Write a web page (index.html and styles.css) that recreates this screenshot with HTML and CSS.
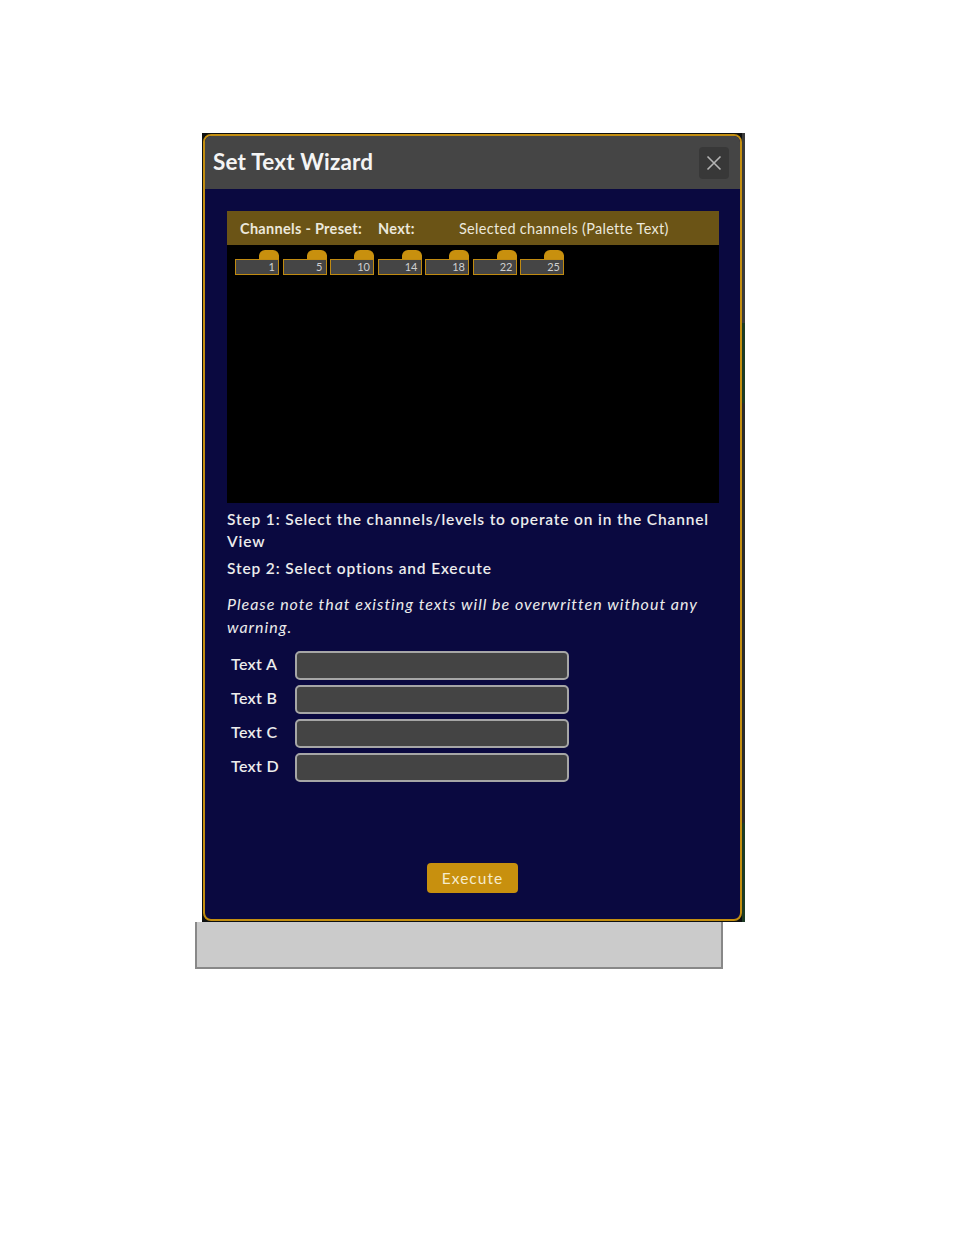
FILE: index.html
```html
<!DOCTYPE html>
<html>
<head>
<meta charset="utf-8">
<link rel="stylesheet" href="styles.css">
</head>
<body>
<div class="shot">
  <div class="strip">
    <span class="seg s1"></span><span class="seg s2"></span><span class="seg s3"></span><span class="seg s4"></span>
  </div>
  <div class="dialog">
    <div class="header">
      <div class="title">Set Text Wizard</div>
      <div class="close">
        <svg width="16" height="16" viewBox="0 0 16 16"><path d="M1.5 1.5 L14.5 14.5 M14.5 1.5 L1.5 14.5" stroke="#b4b4b4" stroke-width="1.6" fill="none"/></svg>
      </div>
    </div>
    <div class="body">
      <div class="panel">
        <div class="panel-head">
          <span class="b lbl1">Channels - Preset:</span>
          <span class="b lbl2">Next:</span>
          <span class="lbl3">Selected channels (Palette Text)</span>
        </div>
        <div class="tiles">
          <div class="tile"><div class="tab"></div><div class="box">1</div></div>
          <div class="tile"><div class="tab"></div><div class="box">5</div></div>
          <div class="tile"><div class="tab"></div><div class="box">10</div></div>
          <div class="tile"><div class="tab"></div><div class="box">14</div></div>
          <div class="tile"><div class="tab"></div><div class="box">18</div></div>
          <div class="tile"><div class="tab"></div><div class="box">22</div></div>
          <div class="tile"><div class="tab"></div><div class="box">25</div></div>
        </div>
      </div>
      <p class="step step1">Step 1: Select the channels/levels to operate on in the Channel View</p>
      <p class="step step2">Step 2: Select options and Execute</p>
      <p class="note">Please note that existing texts will be overwritten without any warning.</p>
      <div class="fields">
        <div class="row"><span class="flabel">Text A</span><div class="input"></div></div>
        <div class="row"><span class="flabel">Text B</span><div class="input"></div></div>
        <div class="row"><span class="flabel">Text C</span><div class="input"></div></div>
        <div class="row"><span class="flabel">Text D</span><div class="input"></div></div>
      </div>
      <div class="actions"><div class="execute">Execute</div></div>
    </div>
  </div>
</div>
<div class="greybox"></div>
</body>
</html>
```
FILE: styles.css
```css
html, body {
  margin: 0;
  padding: 0;
  background: #ffffff;
}
body {
  padding-top: 133px;
  font-family: Lato, "Open Sans", "Liberation Sans", sans-serif;
}
.shot {
  margin-left: 202px;
  width: 543px;
  height: 789px;
  background: #0e1010;
  position: relative;
  box-sizing: border-box;
  padding: 1px 3px 1px 1px;
}
.strip {
  position: absolute;
  right: 0;
  top: 0;
  width: 3px;
  height: 100%;
  display: flex;
  flex-direction: column;
}
.seg { display: block; }
.s1 { height: 190px; background: #3a3a3a; }
.s2 { height: 80px; background: #1c3a24; }
.s3 { height: 420px; background: #2a2a2a; }
.s4 { flex: 1; background: #1c3a24; }
.dialog {
  width: 539px;
  height: 787px;
  box-sizing: border-box;
  border: 2px solid #c38e10;
  border-radius: 8px;
  overflow: hidden;
  background: #0a0940;
  display: flex;
  flex-direction: column;
}
.header {
  height: 53px;
  background: #454545;
  display: flex;
  align-items: center;
  justify-content: space-between;
  padding: 0 11px 0 8px;
  flex-shrink: 0;
}
.title {
  color: #f4f4f4;
  font-weight: 700;
  font-size: 22.5px;
  letter-spacing: 0.2px;
  margin-top: -3px;
}
.close {
  width: 30px;
  height: 32px;
  background: #383838;
  border-radius: 4px;
  display: flex;
  align-items: center;
  justify-content: center;
}
.body {
  flex: 1;
  padding: 22px 21px 0 22px;
  display: flex;
  flex-direction: column;
}
.panel {
  width: 492px;
  height: 292px;
  background: #000000;
}
.panel-head {
  height: 34px;
  background: #6b5416;
  color: #ece8dc;
  font-size: 14.5px;
  letter-spacing: 0.3px;
  display: flex;
  align-items: center;
  padding-left: 13px;
  box-sizing: border-box;
}
.b { font-weight: 700; }
.lbl1 { width: 138px; }
.lbl2 { width: 81px; }
.tiles {
  display: flex;
  gap: 3.5px;
  padding: 5px 0 0 8px;
}
.tile {
  width: 44px;
  display: flex;
  flex-direction: column;
  align-items: flex-end;
}
.tab {
  width: 20px;
  height: 9px;
  background: #c8900e;
  border-radius: 6px 6px 0 0;
}
.box {
  width: 44px;
  height: 16px;
  box-sizing: border-box;
  background: #454545;
  border: 1px solid #c08a10;
  color: #cfcfcf;
  font-size: 11px;
  text-align: right;
  padding-right: 3px;
  line-height: 14px;
}
.step, .note {
  margin: 0;
  color: #ececec;
  font-size: 15.5px;
  line-height: 22px;
  letter-spacing: 0.85px;
  font-weight: 600;
}
.step1 { margin-top: 5px; }
.step2 { margin-top: 5px; }
.note {
  margin-top: 13px;
  font-style: italic;
  font-weight: 400;
  font-size: 16px;
  letter-spacing: 1px;
  line-height: 23px;
  max-width: 478px;
}
.fields {
  margin-top: 13px;
  display: flex;
  flex-direction: column;
  gap: 5px;
}
.row {
  display: flex;
  align-items: center;
  height: 29px;
}
.flabel {
  width: 64px;
  padding-left: 4px;
  color: #ececec;
  font-size: 16px;
  font-weight: 600;
  letter-spacing: 0.3px;
  margin-top: -5px;
}
.input {
  width: 274px;
  height: 29px;
  box-sizing: border-box;
  border: 2px solid #a6a6a6;
  border-radius: 5px;
  background: #444444;
}
.actions {
  margin-top: 81px;
  display: flex;
  justify-content: center;
  padding-right: 1px;
}
.execute {
  width: 91px;
  height: 30px;
  background: #c8900e;
  border-radius: 4px;
  color: #f5ebcc;
  font-size: 15.5px;
  letter-spacing: 1px;
  display: flex;
  align-items: center;
  justify-content: center;
}
.greybox {
  margin-left: 195px;
  width: 528px;
  height: 47px;
  box-sizing: border-box;
  background: #cbcbcb;
  border: 2px solid #888888;
  border-top: none;
}
```
